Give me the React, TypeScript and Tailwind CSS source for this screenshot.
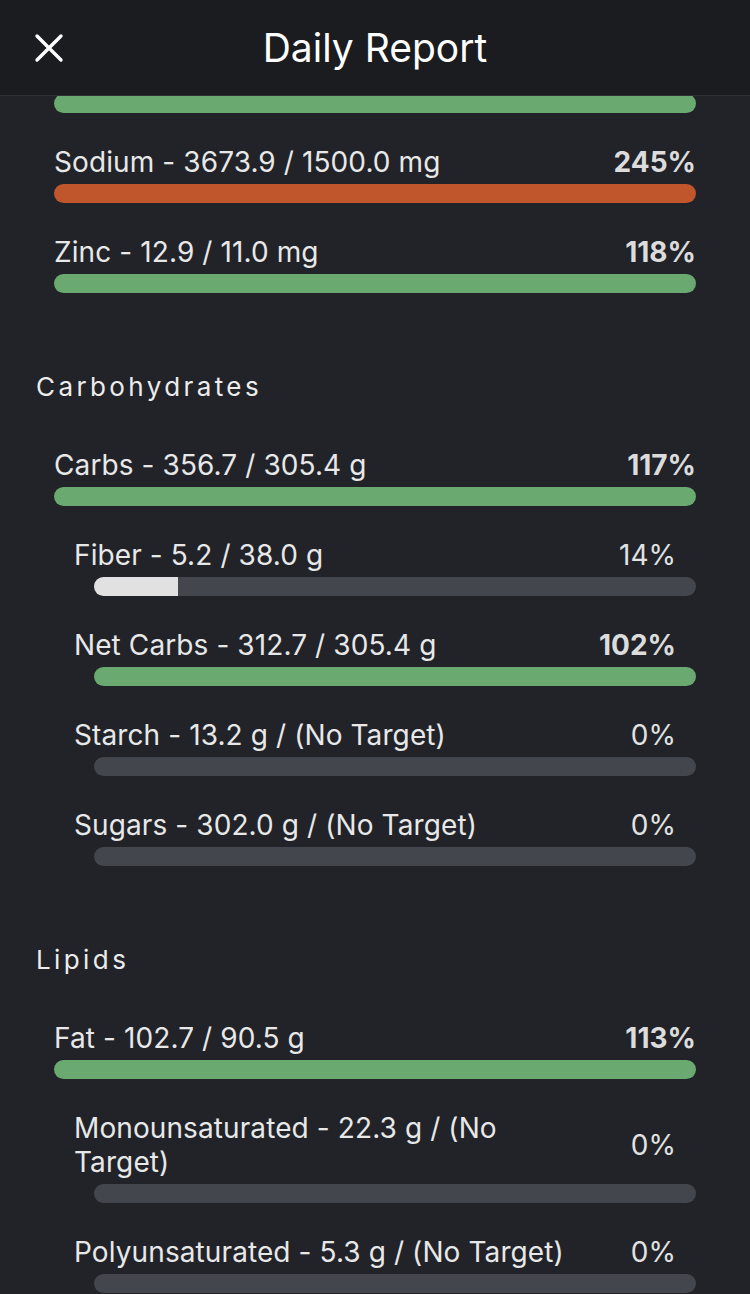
import React from 'react';

type Nutrient = {
  label: string;
  pct: number;
  color?: 'green' | 'orange' | 'white';
  sub?: boolean;
};

const carbs: Nutrient[] = [
  { label: 'Carbs - 356.7 / 305.4 g', pct: 117, color: 'green' },
  { label: 'Fiber - 5.2 / 38.0 g', pct: 14, color: 'white', sub: true },
  { label: 'Net Carbs - 312.7 / 305.4 g', pct: 102, color: 'green', sub: true },
  { label: 'Starch - 13.2 g / (No Target)', pct: 0, sub: true },
  { label: 'Sugars - 302.0 g / (No Target)', pct: 0, sub: true },
];

const lipids: Nutrient[] = [
  { label: 'Fat - 102.7 / 90.5 g', pct: 113, color: 'green' },
  { label: 'Monounsaturated - 22.3 g / (No Target)', pct: 0, sub: true },
  { label: 'Polyunsaturated - 5.3 g / (No Target)', pct: 0, sub: true },
];

const fillClass = {
  green: 'bg-[#6aa96f]',
  orange: 'bg-[#c0562b]',
  white: 'bg-[#e1e1e1]',
};

const Bar: React.FC<{ pct: number; color?: Nutrient['color']; className?: string }> = ({ pct, color, className = '' }) => (
  <div className={`h-[19px] rounded-full bg-[#43464d] overflow-hidden ${className}`}>
    {color && pct > 0 && (
      <div className={`h-full ${fillClass[color]}`} style={{ width: `${Math.min(pct, 100)}%` }} />
    )}
  </div>
);

const Row: React.FC<{ item: Nutrient }> = ({ item }) => {
  const over = item.pct >= 100;
  return (
    <div className={`pb-[32px] ${item.sub ? 'pl-[20px]' : ''}`}>
      <div className={`flex items-center ${item.sub ? 'pr-[20px]' : 'pr-0'}`}>
        <span className="flex-1 min-w-0 pr-[50px] text-[28px] tracking-[0.1px] leading-[34px] text-[#e8e8e8]">{item.label}</span>
        <span className={`shrink-0 text-[28px] leading-[34px] ${over ? 'font-bold text-[#dcdcdc]' : 'text-[#e2e2e2]'}`}>
          {item.pct}%
        </span>
      </div>
      <Bar pct={item.pct} color={item.color} className={`mt-[5px] ${item.sub ? 'ml-[20px]' : ''}`} />
    </div>
  );
};

const Heading: React.FC<{ title: string }> = ({ title }) => (
  <div className="-ml-[18px] mt-[45px] mb-[44px] text-[26px] leading-[34px] tracking-[3.4px] text-[#ececec]">
    {title}
  </div>
);

export default function App() {
  return (
    <div className="w-[750px] h-[1294px] overflow-hidden bg-[#212328] flex flex-col" style={{ fontFamily: 'Inter, Roboto, "Noto Sans", sans-serif' }}>
      <header className="h-[96px] shrink-0 bg-[#1b1c20] border-b border-[#2e3036] flex items-center relative z-10">
        <div className="absolute left-[34px] top-[33px]">
          <svg width="30" height="30" viewBox="0 0 30 30" fill="none" stroke="#ffffff" strokeWidth="3.4" strokeLinecap="round">
            <path d="M3 3 L27 27 M27 3 L3 27" />
          </svg>
        </div>
        <h1 className="flex-1 text-center text-[39px] leading-[40px] text-white font-normal">Daily Report</h1>
      </header>
      <main className="flex-1 min-h-0 overflow-hidden pl-[54px] pr-[54px]">
        <Bar pct={100} color="green" className="-mt-[2px] mb-[32px]" />
        <Row item={{ label: 'Sodium - 3673.9 / 1500.0 mg', pct: 245, color: 'orange' }} />
        <Row item={{ label: 'Zinc - 12.9 / 11.0 mg', pct: 118, color: 'green' }} />
        <Heading title="Carbohydrates" />
        {carbs.map((c) => (
          <Row key={c.label} item={c} />
        ))}
        <Heading title="Lipids" />
        {lipids.map((c) => (
          <Row key={c.label} item={c} />
        ))}
      </main>
    </div>
  );
}
